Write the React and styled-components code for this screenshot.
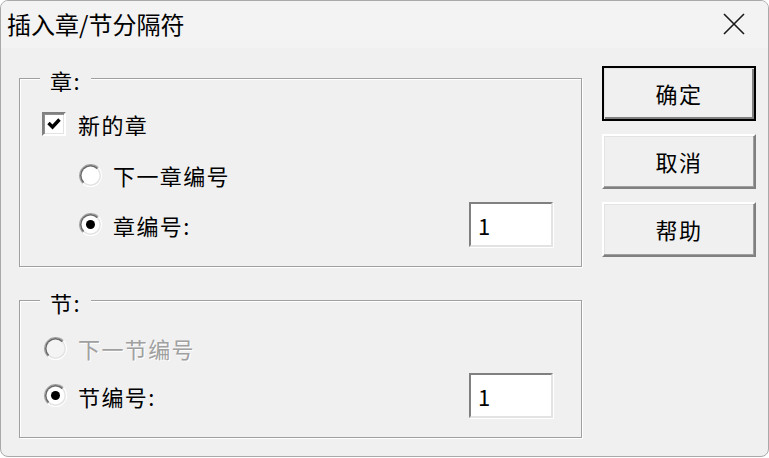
import React from 'react';
import styled, { createGlobalStyle, css } from 'styled-components';

const FONT = `"Noto Sans CJK SC", "Microsoft YaHei", sans-serif`;

const GlobalStyle = createGlobalStyle`
  html, body {
    margin: 0;
    padding: 0;
    background: #fff;
  }
  * {
    box-sizing: border-box;
  }
`;

const Window = styled.div`
  width: 769px;
  height: 457px;
  display: flex;
  flex-direction: column;
  border: 1px solid #a9a9a9;
  border-radius: 8px;
  overflow: hidden;
  background: #f0f0f0;
  font-family: ${FONT};
  color: #000;
`;

const TitleBar = styled.div`
  flex: none;
  height: 47px;
  display: flex;
  align-items: center;
  justify-content: space-between;
  padding: 0 23px 2px 6px;
  background: #f3f3f3;
`;

const Title = styled.h1`
  margin: 0;
  font-size: 24px;
  font-weight: 400;
  line-height: 1;
`;

const CloseButton = styled.button`
  width: 22px;
  height: 22px;
  padding: 0;
  border: none;
  background: none;
  display: flex;
`;

const Body = styled.div`
  flex: 1;
  display: flex;
  align-items: flex-start;
  gap: 20px;
  padding-left: 18px;
`;

const LeftColumn = styled.div`
  width: 563px;
  display: flex;
  flex-direction: column;
  gap: 33px;
  padding-top: 30px;
`;

const ButtonColumn = styled.div`
  width: 154px;
  display: flex;
  flex-direction: column;
  gap: 13px;
  padding-top: 18px;
`;

const Group = styled.div`
  position: relative;
  display: flex;
  flex-direction: column;
  padding: ${p => p.$pad};
  border: 1px solid #a0a0a0;
  box-shadow: inset 1px 1px 0 #fff, 1px 1px 0 #fff;
`;

const Legend = styled.span`
  position: absolute;
  top: -11px;
  left: 20px;
  padding: 0 10px;
  background: #f0f0f0;
  font-size: 22px;
  line-height: 24px;
  letter-spacing: 1.4px;
`;

const Row = styled.div`
  display: flex;
  align-items: center;
  gap: ${p => p.$gap || 11}px;
  height: ${p => p.$h || 24}px;
  margin-top: ${p => p.$mt || 0}px;
  margin-left: ${p => p.$indent || 0}px;
`;

const Label = styled.span`
  font-size: 22px;
  line-height: 1;
  letter-spacing: 1.4px;
  white-space: nowrap;
  ${p => p.$disabled && css`
    color: #a0a0a0;
    text-shadow: 1px 1px 0 #fff;
  `}
`;

const CheckBox = styled.span`
  flex: none;
  width: 24px;
  height: 24px;
  display: flex;
  align-items: center;
  justify-content: center;
  background: #fff;
  border: 2px solid;
  border-color: #808080 #fff #fff #808080;
  box-shadow: inset 1px 1px 0 #909090, inset -1px -1px 0 #e3e3e3;
`;

const NumberInput = styled.input`
  margin-left: auto;
  width: 84px;
  height: 45px;
  padding: 0 0 0 7px;
  border: 2px solid;
  border-color: #808080 #e3e3e3 #e3e3e3 #808080;
  box-shadow: 1px 1px 0 #fff;
  background: #fff;
  font-family: ${FONT};
  font-size: 22px;
  color: #000;
  outline: none;
`;

const Button = styled.button`
  width: 154px;
  height: 55px;
  padding: 0 0 2px;
  font-family: ${FONT};
  font-size: 22px;
  letter-spacing: 1.4px;
  color: #000;
  background: #f0f0f0;
  border: 2px solid;
  border-color: #fff #808080 #808080 #fff;
  box-shadow: inset -1px -1px 0 #a0a0a0, inset 1px 1px 0 #e3e3e3;
  ${p => p.$default && css`
    border-color: #000;
    box-shadow: inset 1px 1px 0 #e3e3e3, inset -2px -2px 0 #808080;
  `}
`;

function Radio({ checked, disabled }) {
  const c = 11.5;
  const half = (r, color) => {
    const d = r * 0.7071;
    return (
      <path
        d={`M${c - d} ${c + d} A${r} ${r} 0 0 1 ${c + d} ${c - d} Z`}
        fill={color}
      />
    );
  };
  return (
    <svg width="23" height="23" viewBox="0 0 23 23" style={{ flex: 'none' }}>
      <circle cx={c} cy={c} r="11.5" fill="#fff" />
      {half(11.5, '#a0a0a0')}
      <circle cx={c} cy={c} r="10.5" fill="#e3e3e3" />
      {half(10.5, '#696969')}
      <circle cx={c} cy={c} r="9" fill={disabled ? '#f4f4f4' : '#fff'} />
      {checked && <circle cx={c} cy={c} r="4.5" fill="#000" />}
    </svg>
  );
}

export default function App() {
  return (
    <>
      <GlobalStyle />
      <Window>
        <TitleBar>
          <Title>插入章/节分隔符</Title>
          <CloseButton aria-label="关闭">
            <svg width="22" height="22" viewBox="0 0 22 22">
              <path d="M1 1 L21 21 M21 1 L1 21" stroke="#1a1a1a" strokeWidth="1.6" />
            </svg>
          </CloseButton>
        </TitleBar>
        <Body>
          <LeftColumn>
            <Group $pad="33px 28px 19px 22px">
              <Legend>章:</Legend>
              <Row $gap={12}>
                <CheckBox>
                  <svg width="14" height="12" viewBox="0 0 14 12">
                    <path d="M1.5 5 L5.5 9 L12.5 1.5" fill="none" stroke="#000" strokeWidth="3.4" />
                  </svg>
                </CheckBox>
                <Label>新的章</Label>
              </Row>
              <Row $indent={37} $mt={27}>
                <Radio />
                <Label>下一章编号</Label>
              </Row>
              <Row $indent={37} $mt={15} $h={45}>
                <Radio checked />
                <Label>章编号:</Label>
                <NumberInput defaultValue="1" />
              </Row>
            </Group>
            <Group $pad="35px 28px 19px 24px">
              <Legend>节:</Legend>
              <Row>
                <Radio disabled />
                <Label $disabled>下一节编号</Label>
              </Row>
              <Row $mt={13} $h={45}>
                <Radio checked />
                <Label>节编号:</Label>
                <NumberInput defaultValue="1" />
              </Row>
            </Group>
          </LeftColumn>
          <ButtonColumn>
            <Button $default>确定</Button>
            <Button>取消</Button>
            <Button>帮助</Button>
          </ButtonColumn>
        </Body>
      </Window>
    </>
  );
}
